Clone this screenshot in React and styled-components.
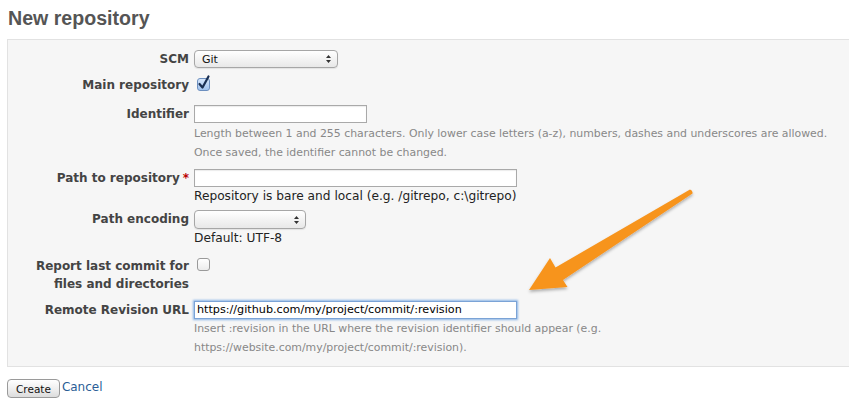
import React from 'react';
import styled, { createGlobalStyle } from 'styled-components';

const GlobalStyle = createGlobalStyle`
    html, body {
        margin: 0;
        padding: 0;
        background: #fff;
        overflow: hidden;
    }
    body {
        font-family: "DejaVu Sans", Verdana, sans-serif;
        color: #333;
    }
`;

const Page = styled.div`
    position: relative;
    padding: 0 0 0 7px;
    width: 849px;
    height: 418px;
    box-sizing: border-box;
`;

const Title = styled.h2`
    margin: 0;
    padding: 7px 0 0 1px;
    height: 39px;
    box-sizing: border-box;
    font-family: "Liberation Sans", Arial, sans-serif;
    font-size: 19.6px;
    font-weight: bold;
    color: #555;
`;

const Panel = styled.div`
    background: #f6f6f6;
    border: 1px solid #e2e2e2;
    border-right: none;
    margin-right: -20px;
    padding: 10px 0 9px 0;
`;

const Row = styled.div`
    display: grid;
    grid-template-columns: 181px 1fr;
    column-gap: 5px;
    margin-top: ${p => p.$top || 0}px;
`;

const Label = styled.label`
    text-align: right;
    font-weight: bold;
    font-size: 12px;
    line-height: ${p => p.$lh || 18}px;
    padding-top: ${p => p.$pt || 0}px;
    color: #444;
    white-space: nowrap;
`;

const Required = styled.span`
    color: #bb0000;
    margin-left: 3px;
`;

const Field = styled.div`
    display: flex;
    flex-direction: column;
    align-items: flex-start;
`;

const TextInput = styled.div`
    width: ${p => p.$w}px;
    height: 18px;
    box-sizing: border-box;
    background: #fff;
    border: 1px solid ${p => (p.$focus ? '#7ba3d6' : '#a9a9a9')};
    box-shadow: ${p => (p.$focus ? '0 0 2px 1px #8ab4e6' : 'inset 0 1px 1px rgba(0,0,0,0.08)')};
    font-size: 11.2px;
    line-height: 16px;
    padding: 0 2px;
    color: #000;
    white-space: nowrap;
    overflow: hidden;
`;

const SelectBox = styled.div`
    width: ${p => p.$w}px;
    height: ${p => p.$h || 18}px;
    box-sizing: border-box;
    display: flex;
    align-items: center;
    justify-content: space-between;
    padding: 0 6px 0 7px;
    border: 1px solid #a6a6a6;
    border-radius: 4px;
    background: linear-gradient(#ffffff, #f1f1f1 60%, #e8e8e8);
    box-shadow: 0 1px 1px rgba(0,0,0,0.08);
    font-size: 11px;
    color: #111;
`;

const Hint = styled.div`
    font-size: ${p => (p.$dark ? 12.2 : 10.9)}px;
    line-height: ${p => p.$lh || 19}px;
    color: ${p => (p.$dark ? '#222' : '#888')};
    white-space: nowrap;
`;

const Box = styled.span`
    display: inline-flex;
    align-items: center;
    justify-content: center;
    width: 13px;
    height: 13px;
    box-sizing: border-box;
    margin: ${p => p.$mt}px 0 0 3px;
    border-radius: 3px;
    border: 1px solid ${p => (p.$checked ? '#6c8fbf' : '#9a9a9a')};
    background: ${p => (p.$checked ? 'linear-gradient(#d6e6fb, #9fc1ec)' : 'linear-gradient(#fff, #ececec)')};
    position: relative;
    overflow: visible;
`;

const Actions = styled.div`
    display: flex;
    align-items: center;
    gap: 2px;
    margin-top: 12px;
`;

const Button = styled.button`
    font-family: "DejaVu Sans", Verdana, sans-serif;
    font-size: 10.5px;
    height: 19px;
    padding: 1px 8px 0;
    border: 1px solid #9a9a9a;
    border-radius: 4px;
    background: linear-gradient(#ffffff, #eeeeee 55%, #dcdcdc);
    color: #111;
`;

const Link = styled.a`
    font-size: 12px;
    color: #2a5d96;
    text-decoration: none;
    margin-top: -3px;
`;

const Arrow = styled.svg`
    position: absolute;
    left: 0;
    top: 0;
    pointer-events: none;
`;

const Updown = () => (
    <svg width="5" height="8" viewBox="0 0 5 8">
        <path d="M0 3 L2.5 0 L5 3 Z M0 5 L2.5 8 L5 5 Z" fill="#333" />
    </svg>
);

const Check = ({ checked, mt }) => (
    <Box $checked={checked} $mt={mt}>
        {checked && (
            <svg width="14" height="15" viewBox="0 0 14 15" style={{ position: 'absolute', left: -1, top: -4 }}>
                <path d="M2.5 9 L5.5 12.5 L11.5 1.5" fill="none" stroke="#1a2f52" strokeWidth="2.2" strokeLinecap="round" strokeLinejoin="round" />
            </svg>
        )}
    </Box>
);

const App = () => {
    return <Page>
        <GlobalStyle />
        <Title>New repository</Title>
        <Panel>
            <Row>
                <Label>SCM</Label>
                <Field>
                    <SelectBox $w={144}>Git<Updown /></SelectBox>
                </Field>
            </Row>
            <Row $top={7}>
                <Label $lh={20}>Main repository</Label>
                <Field>
                    <Check checked mt={3} />
                </Field>
            </Row>
            <Row $top={10}>
                <Label>Identifier</Label>
                <Field>
                    <TextInput $w={173} />
                    <Hint style={{ marginTop: 1 }}>Length between 1 and 255 characters. Only lower case letters (a-z), numbers, dashes and underscores are allowed.</Hint>
                    <Hint>Once saved, the identifier cannot be changed.</Hint>
                </Field>
            </Row>
            <Row $top={7}>
                <Label>Path to repository<Required>*</Required></Label>
                <Field>
                    <TextInput $w={323} />
                    <Hint $dark $lh={19}>Repository is bare and local (e.g. /gitrepo, c:\gitrepo)</Hint>
                </Field>
            </Row>
            <Row $top={4}>
                <Label $lh={19}>Path encoding</Label>
                <Field>
                    <SelectBox $w={112} $h={19}><span /><Updown /></SelectBox>
                    <Hint $dark $lh={19}>Default: UTF-8</Hint>
                </Field>
            </Row>
            <Row $top={8}>
                <Label $pt={1}>Report last commit for<br />files and directories</Label>
                <Field>
                    <Check mt={2} />
                </Field>
            </Row>
            <Row $top={8}>
                <Label>Remote Revision URL</Label>
                <Field>
                    <TextInput $w={323} $focus>https://github.com/my/project/commit/:revision</TextInput>
                    <Hint>Insert :revision in the URL where the revision identifier should appear (e.g.</Hint>
                    <Hint>https://website.com/my/project/commit/:revision).</Hint>
                </Field>
            </Row>
        </Panel>
        <Actions>
            <Button>Create</Button>
            <Link href="#">Cancel</Link>
        </Actions>
        <Arrow width="849" height="418" viewBox="0 0 849 418">
            <defs>
                <filter id="sh" x="-20%" y="-20%" width="140%" height="140%">
                    <feDropShadow dx="0" dy="2" stdDeviation="1.5" floodColor="#000" floodOpacity="0.3" />
                </filter>
            </defs>
            <path
                d="M690 189.5 Q693 190.5 692.5 193.5 L563 280 L567.5 287 L529 290 L550 258 L555.5 267.5 Z"
                fill="#f7941d"
                filter="url(#sh)"
            />
        </Arrow>
    </Page>;
};

export default App;
